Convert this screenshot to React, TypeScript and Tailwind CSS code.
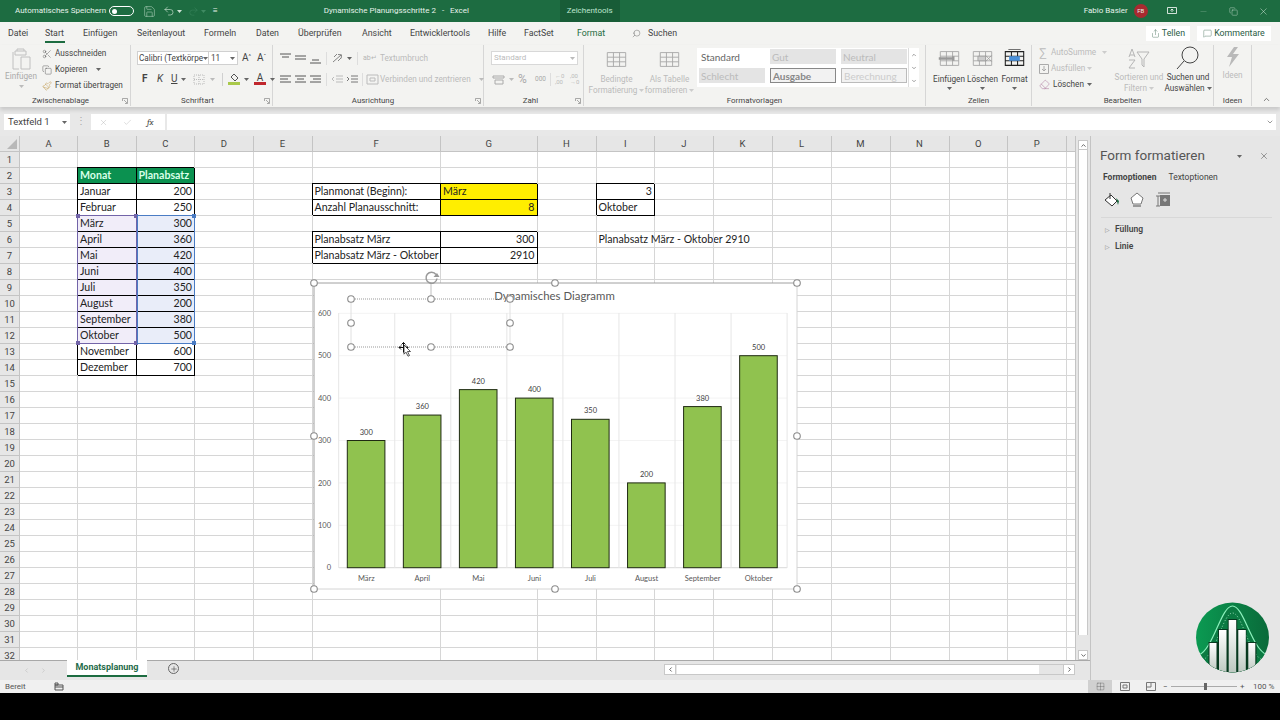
import React from "react";
import { Scissors, Copy, Paintbrush, Save, Undo2, Redo2, Search, X, Minus, Check, ChevronUp, ChevronDown, Share, MessageSquare, Eraser, Plus, ChevronLeft, ChevronRight, Grid2x2 } from "lucide-react";

const ui = "font-['Roboto','Open_Sans',sans-serif]";
const cal = "font-['Lato','Liberation_Sans',sans-serif]";

const Caret = ({ c = "#666" }: { c?: string }) => (
  <svg width="5" height="3" viewBox="0 0 5 3" className="shrink-0"><path d="M0 0h5L2.500 3z" fill={c} /></svg>
);

const Lines = ({ d, c = "#555" }: { d: string; c?: string }) => (
  <svg width="13" height="11" viewBox="0 0 13 11" className="shrink-0"><path d={d} stroke={c} strokeWidth="1" fill="none" /></svg>
);

const Launcher = () => (
  <svg width="6" height="6" viewBox="0 0 6 6" className="shrink-0"><path d="M.5 3V.5H5.500V5.500H3M2 2l3 3" stroke="#888" strokeWidth=".7" fill="none" /></svg>
);

const Group = ({ cls, label, lc = "", launcher, children }: { cls: string; label: string; lc?: string; launcher?: boolean; children: React.ReactNode }) => (
  <div className={`${cls} flex flex-col shrink-0 border-r border-[#d6d6d6] mb-[1px]`}>
    <div className="h-[51px] flex">{children}</div>
    <div className="h-[10px] flex items-center px-[2px] text-[7.900px] text-[#444]">
      <span className={`flex-1 text-center leading-none ${lc}`}>{label}</span>
      {launcher ? <Launcher /> : null}
    </div>
  </div>
);

const tabs: [string, string][] = [
  ["Datei", "w-[37px]"], ["Start", "w-[38px]"], ["Einfügen", "w-[54px]"], ["Seitenlayout", "w-[67px]"],
  ["Formeln", "w-[52px]"], ["Daten", "w-[42px]"], ["Überprüfen", "w-[64px]"], ["Ansicht", "w-[48px]"],
  ["Entwicklertools", "w-[78px]"], ["Hilfe", "w-[36px]"], ["FactSet", "w-[53px]"], ["Format", "w-[55px]"],
];

const GridIcon = ({ mid, dark }: { mid?: string; dark?: boolean }) => (
  <svg width="23" height="19" viewBox="0 0 30 24" className="my-[2px]">
    <path d="M3 3h24v18H3zM3 9h24M3 15h24M11 3v18M19 3v18" stroke={dark ? "#222" : "#a8a8a8"} strokeWidth={dark ? 1.400 : 1.200} fill="none" />
    {mid === "blue" ? <path d="M8 9h14v6H8z" fill="#4a90d9" /> : null}
    {mid === "in" ? <path d="M1 12h20M20 9v6" stroke="#999" strokeWidth="3" fill="none" /> : null}
    {mid === "out" ? <path d="M9 9h10v6H9zM19 8l8 8M27 8l-8 8" stroke="#999" strokeWidth="1" fill="#ccc" /> : null}
    {dark ? <path d="M7 0h16" stroke="#222" strokeWidth="1" /> : null}
  </svg>
);

const StyleCell = ({ t, cls }: { t: string; cls: string }) => (
  <div className={`${cal} ${cls} w-[66px] h-[15px] flex items-center pl-[2px] shrink-0 text-[10px] leading-none`}>{t}</div>
);

function Ribbon() {
  return (
    <div className={`${ui} h-[62px] bg-[#f3f3f1] flex text-[8.200px] text-[#444] leading-none shadow-[0_3px_4px_#c8c8c8] relative z-30`}>
      <Group cls="w-[131px]" label="Zwischenablage" lc="pr-[3px]" launcher>
        <div className="w-[42px] flex flex-col items-center text-[#aaa] pt-[3px]">
          <svg width="20" height="22" viewBox="0 0 20 22"><path d="M4 3h11v4H4zM6 3V1h7v2M2 4v17h6M10 9h9v12h-9z" stroke="#c0c0c0" strokeWidth="1" fill="none" /></svg>
          <span className="mt-[2px]">Einfügen</span>
          <span className="mt-[5px]"><Caret c="#bbb" /></span>
        </div>
        <div className="flex flex-col pt-[3px] gap-[5px]">
          <div className="flex items-center h-[11px] gap-[3px]"><Scissors size={10} strokeWidth={1} /><span>Ausschneiden</span></div>
          <div className="flex items-center h-[11px] gap-[3px]"><Copy size={10} strokeWidth={1} /><span>Kopieren</span><span className="ml-[6px]"><Caret /></span></div>
          <div className="flex items-center h-[11px] gap-[3px]"><Paintbrush size={10} strokeWidth={1} color="#b5892f" /><span>Format übertragen</span></div>
        </div>
      </Group>
      <div className="w-[4px] shrink-0" />
      <Group cls="w-[138px]" label="Schriftart" lc="pr-[6px]" launcher>
        <div className="flex flex-col pl-[2px] pt-[6px]">
          <div className="flex items-center h-[14px]">
            <div className="w-[72px] h-[14px] bg-white border border-[#d0d0d0] flex items-center pl-[1px] text-[8.200px] justify-between pr-[1px] whitespace-nowrap overflow-visible"><span>Calibri (Textkörpe</span><Caret /></div>
            <div className="w-[29px] h-[14px] bg-white border border-l-0 border-[#d0d0d0] flex items-center justify-between px-[2px]"><span>11</span><Caret /></div>
            <span className="ml-[4px] w-[15px] text-[10px]">A<sup className="text-[6px]">^</sup></span>
            <span className="w-[15px] text-[10px]">A<sup className="text-[6px]">ˇ</sup></span>
          </div>
          <div className="flex items-center h-[14px] mt-[7px] text-[10px] pl-[5px]">
            <span className="font-bold w-[15px]">F</span><span className="italic w-[14px]">K</span><span className="underline w-[10px]">U</span><span className="w-[12px]"><Caret /></span>
            <svg width="12" height="11" viewBox="0 0 12 11" className="mr-[5px]"><path d="M1 1h10v9H1zM6 1v9M1 5.500h10" stroke="#bbb" strokeDasharray="1 1" fill="none" /></svg>
            <span className="w-[12px]"><Caret c="#bbb" /></span>
            <span className="w-px h-[13px] bg-[#d0d0d0] mr-[5px]" />
            <div className="w-[12px] flex flex-col items-center mr-[4px]"><svg width="11" height="9" viewBox="0 0 11 9"><path d="M5 1l4 4-3 3-4-4z" stroke="#555" fill="none" /></svg><div className="w-[12px] h-[3px] bg-[#a9c94a]" /></div>
            <span className="w-[10px]"><Caret /></span>
            <div className="w-[12px] flex flex-col items-center mr-[4px] text-[10px] leading-[9px]"><span>A</span><div className="w-[12px] h-[3px] bg-[#c0272d]" /></div>
            <Caret />
          </div>
        </div>
      </Group>
      <div className="w-[4px] shrink-0" />
      <Group cls="w-[207px]" label="Ausrichtung" lc="pr-[8px]" launcher>
        <div className="flex flex-col pl-[2px] pt-[6px] gap-[7px]">
          <div className="flex items-center h-[14px] gap-[2px]">
            <Lines d="M1 1h11M3 4h7" /><Lines d="M1 3h11M1 6h11" /><Lines d="M3 7h7M1 10h11" />
            <span className="w-px h-[13px] bg-[#ddd] mx-[2px]" />
            <svg width="14" height="11" viewBox="0 0 14 11" className="shrink-0"><path d="M2 9l8-7M7 1.500l3.500.3-.3 3.500M3 4l3-3M7 8l3-3" stroke="#777" fill="none" strokeWidth=".9" /></svg><Caret />
            <span className="w-px h-[13px] bg-[#ddd] mx-[3px]" />
            <span className="text-[7px] text-[#b5b5b5] w-[11px] text-center">ab↵</span>
            <span className="text-[#bbb] ml-[4px]">Textumbruch</span>
          </div>
          <div className="flex items-center h-[14px] gap-[2px]">
            <Lines d="M1 2h11M1 5h8M1 8h11" /><Lines d="M1 2h11M3 5h7M1 8h11" /><Lines d="M1 2h11M4 5h8M1 8h11" />
            <span className="w-px h-[13px] bg-[#ddd] mx-[2px]" />
            <Lines d="M5 2h7M5 5h7M5 8h7M3 3L1 5l2 2" c="#bbb" /><Lines d="M5 2h7M5 5h7M5 8h7M1 3l2 2-2 2" c="#777" />
            <span className="w-px h-[13px] bg-[#ddd] mx-px" />
            <Lines d="M1 1h11v9H1zM4 4h5v3H4z" c="#bbb" />
            <span className="text-[#bbb] -ml-[1px] whitespace-nowrap">Verbinden und zentrieren</span>
            <span className="ml-[6px]"><Caret c="#bbb" /></span>
          </div>
        </div>
      </Group>
      <div className="w-[3px] shrink-0" />
      <Group cls="w-[97px]" label="Zahl" lc="pr-[3px]" launcher>
        <div className="flex flex-col pl-[4px] pt-[6px] text-[#bbb]">
          <div className="w-[87px] h-[14px] bg-white border border-[#d8d8d8] flex items-center justify-between px-[2px] text-[8px]"><span>Standard</span><Caret c="#bbb" /></div>
          <div className="flex items-center h-[14px] mt-[7px] gap-[4px] pl-[1px]">
            <Lines d="M1 2h11v2H1zM3 6h8v4H3z" c="#aaa" /><Caret c="#bbb" />
            <span className="text-[12px] text-[#aaa] w-[13px]">%</span>
            <span className="text-[6.500px] text-[#aaa]">000</span>
            <span className="w-px h-[13px] bg-[#ddd]" />
            <span className="text-[6px] leading-[6px] w-[11px]">←0<br />,00</span>
            <span className="text-[6px] leading-[6px] w-[11px]">,00<br />→0</span>
          </div>
        </div>
      </Group>
      <div className="w-[6px] shrink-0" />
      <Group cls="w-[336px]" label="Formatvorlagen" lc="pr-[6px]">
        <div className="w-[53px] flex flex-col items-center text-[#bbb] pt-[3px] whitespace-nowrap">
          <GridIcon />
          <span className="mt-[4px]">Bedingte</span>
          <span className="mt-[3px] flex items-center gap-[2px]">Formatierung<Caret c="#ccc" /></span>
        </div>
        <div className="w-[53px] flex flex-col items-center text-[#bbb] pt-[3px] whitespace-nowrap">
          <GridIcon />
          <span className="mt-[4px]">Als Tabelle</span>
          <span className="mt-[3px] flex items-center gap-[2px]">formatieren<Caret c="#ccc" /></span>
        </div>
        <div className="ml-[1px] mt-[3px] h-[39px] w-[222px] bg-white flex">
          <div className="w-[211px] pl-[2px] pt-[1px] flex flex-col gap-[4px]">
            <div className="flex gap-[5px]">
              <StyleCell t="Standard" cls="text-[#666]" />
              <StyleCell t="Gut" cls="bg-[#e4e4e4] text-[#bbb]" />
              <StyleCell t="Neutral" cls="bg-[#e4e4e4] text-[#bbb]" />
            </div>
            <div className="flex gap-[5px]">
              <StyleCell t="Schlecht" cls="bg-[#e4e4e4] text-[#bbb]" />
              <StyleCell t="Ausgabe" cls="bg-[#f2f2f2] border border-[#888] text-[#888] font-bold" />
              <StyleCell t="Berechnung" cls="bg-[#f2f2f2] border border-[#bbb] text-[#ccc]" />
            </div>
          </div>
          <div className="w-[10px] border-l border-[#ddd] flex flex-col items-center justify-around">
            <ChevronUp size={6} /><ChevronDown size={6} /><ChevronDown size={6} />
          </div>
        </div>
      </Group>
      <Group cls="w-[106px]" label="Zellen">
        <div className="flex pl-[6px] pt-[2px]">
          {[["Einfügen", "in", false, "w-[34px]"], ["Löschen", "out", false, "w-[33px]"], ["Format", "blue", true, "w-[31px]"]].map(([t, m, d, w]) => (
            <div key={t as string} className={`${w as string} flex flex-col items-center`}>
              <GridIcon mid={m as string} dark={d as boolean} />
              <span className="mt-[5px]">{t as string}</span>
              <span className="mt-[4px]"><Caret /></span>
            </div>
          ))}
        </div>
      </Group>
      <Group cls="w-[182px]" label="Bearbeiten">
        <div className="w-[82px] flex flex-col pl-[7px] pt-[2px] gap-[5px] text-[#bbb]">
          <div className="flex items-center h-[11px] gap-[2px]"><span className="text-[12px] w-[10px]">∑</span><span>AutoSumme</span><span className="ml-[4px]"><Caret c="#ccc" /></span></div>
          <div className="flex items-center h-[11px] gap-[2px]"><svg width="10" height="10" viewBox="0 0 10 10"><path d="M.5.5h9v9h-9zM5 2v5M3 5l2 2 2-2" stroke="#aaa" fill="none" /></svg><span>Ausfüllen</span><Caret c="#ccc" /></div>
          <div className="flex items-center h-[11px] gap-[2px] text-[#444]"><Eraser size={11} strokeWidth={1} color="#a0608f" /><span className="ml-[1px]">Löschen</span><span className="ml-[1px]"><Caret /></span></div>
        </div>
        <div className="w-[50px] flex flex-col items-center text-[#bbb] pt-[2px] whitespace-nowrap">
          <svg width="22" height="24" viewBox="0 0 22 24"><path d="M1 10l3-8 3 8M2 8h4M1 13h6l-6 8h6M9 5h12l-5 7v8l-2-2v-6z" stroke="#b5b5b5" fill="none" /></svg>
          <span className="mt-[2px]">Sortieren und</span>
          <span className="mt-[3px] flex items-center gap-[2px]">Filtern<Caret c="#ccc" /></span>
        </div>
        <div className="w-[48px] flex flex-col items-center pt-[1px] whitespace-nowrap">
          <svg width="24" height="25" viewBox="0 0 24 25"><circle cx="14" cy="9" r="8" stroke="#444" fill="none" /><path d="M8 15l-7 8" stroke="#444" /></svg>
          <span className="mt-[2px]">Suchen und</span>
          <span className="mt-[3px] flex items-center gap-[2px]">Auswählen<Caret /></span>
        </div>
      </Group>
      <Group cls="w-[38px]" label="Ideen">
        <div className="w-full flex flex-col items-center text-[#bbb] pt-[1px]">
          <svg width="16" height="22" viewBox="0 0 16 22"><path d="M9 1L2 11h5l-3 10 10-13H8l5-7z" fill="#b9b9b9" /></svg>
          <span className="mt-[3px]">Ideen</span>
        </div>
      </Group>
      <div className="flex-1 flex items-end justify-center pb-[3px]"><ChevronUp size={9} color="#555" /></div>
    </div>
  );
}

const colNames = ["A", "B", "C", "D", "E", "F", "G", "H", "I", "J", "K", "L", "M", "N", "O", "P", ""];
const rowNums = Array.from({ length: 32 }, (_, i) => i + 1);
const box = "border-black shadow-[-1px_-1px_0_0_#000] relative z-10";

type C = { t?: string; r?: boolean; cls?: string };
const cells: Record<string, C> = {
  B2: { t: "Monat", cls: `${box} bg-[#0b9150] text-[#d8ffe8] font-bold` },
  C2: { t: "Planabsatz", cls: `${box} bg-[#0b9150] text-[#d8ffe8] font-bold` },
  F3: { t: "Planmonat (Beginn):", cls: box },
  G3: { t: "März", cls: `${box} bg-[#ffee00]` },
  F4: { t: "Anzahl Planausschnitt:", cls: box },
  G4: { t: "8", r: true, cls: `${box} bg-[#ffee00]` },
  F6: { t: "Planabsatz März", cls: box },
  G6: { t: "300", r: true, cls: box },
  F7: { t: "Planabsatz März - Oktober", cls: box },
  G7: { t: "2910", r: true, cls: box },
  I3: { t: "3", r: true, cls: box },
  I4: { t: "Oktober", cls: box },
  I6: { t: "Planabsatz März - Oktober 2910" },
};
const table: [string, number][] = [["Januar", 200], ["Februar", 250], ["März", 300], ["April", 360], ["Mai", 420], ["Juni", 400], ["Juli", 350], ["August", 200], ["September", 380], ["Oktober", 500], ["November", 600], ["Dezember", 700]];
table.forEach(([m, v], i) => {
  const n = i + 3;
  const sel = n >= 5 && n <= 12;
  cells[`B${n}`] = { t: m, cls: `${box} ${sel ? "bg-[#f1edf9]" : ""}` };
  cells[`C${n}`] = { t: String(v), r: true, cls: `${box} ${sel ? "bg-[#e9edf9]" : ""}` };
});

const Square = ({ cls, c }: { cls: string; c: string }) => <div className={`absolute w-[4px] h-[4px] ${cls} ${c}`} />;

function Sheet() {
  return (
    <div className={`relative h-[524px] w-[1076px] overflow-hidden bg-white grid grid-cols-[20px_58px_58.500px_58.500px_58.500px_59px_128.500px_96.500px_59px_58.500px_58.500px_59px_59px_59px_59px_58.500px_58.500px_10px] auto-rows-[16px] border-r border-[#c4c4c4] ${cal} text-[10.600px] text-[#222] leading-none`}>
      <div className="bg-[#e6e6e6] border-r border-b border-[#c4c4c4] relative">
        <svg width="10" height="10" viewBox="0 0 10 10" className="absolute right-[2px] bottom-[2px]"><path d="M10 0v10H0z" fill="#b8b8b8" /></svg>
      </div>
      {colNames.map((c, i) => (
        <div key={i} className={`${ui} bg-[#e6e6e6] border-r border-b border-[#c4c4c4] flex items-center justify-center text-[9.500px] text-[#444]`}>{c}</div>
      ))}
      {rowNums.map((r) => (
        <React.Fragment key={r}>
          <div className={`${ui} bg-[#e6e6e6] border-r border-b border-[#c4c4c4] flex items-center justify-center text-[9.500px] text-[#444]`}>{r}</div>
          {colNames.map((c, i) => {
            const d = c ? cells[`${c}${r}`] : undefined;
            return (
              <div key={i} className={`border-r border-b border-[#d6d6d6] flex items-center px-[2px] whitespace-nowrap ${d?.r ? "justify-end" : ""} ${d?.cls ?? ""}`}>{d?.t}</div>
            );
          })}
        </React.Fragment>
      ))}
      <div className="absolute z-20 col-start-3 col-end-4 row-start-6 row-end-14 -left-px -top-px right-0 bottom-0 border border-[#7264a8]">
        <Square cls="-left-[2px] -top-[2px]" c="bg-[#7264a8]" /><Square cls="-right-[2px] -top-[2px]" c="bg-[#7264a8]" />
        <Square cls="-left-[2px] -bottom-[2px]" c="bg-[#7264a8]" /><Square cls="-right-[2px] -bottom-[2px]" c="bg-[#7264a8]" />
      </div>
      <div className="absolute z-20 col-start-4 col-end-5 row-start-6 row-end-14 left-0 -top-px right-0 bottom-0 border border-[#4a7cc4]">
        <Square cls="-right-[2px] -top-[2px]" c="bg-[#4a7cc4]" /><Square cls="-right-[2px] -bottom-[2px]" c="bg-[#4a7cc4]" />
      </div>
      <Chart />
    </div>
  );
}

const bars: [string, number][] = [["März", 300], ["April", 360], ["Mai", 420], ["Juni", 400], ["Juli", 350], ["August", 200], ["September", 380], ["Oktober", 500]];

const Handle = ({ x, y }: { x: number; y: number }) => <circle cx={x} cy={y} r="3.300" fill="#fff" stroke="#8c8c8c" strokeWidth="1.100" />;

function Chart() {
  const base = 567.7;
  const k = 254.4 / 600;
  return (
    <div className="absolute z-30 left-[314px] top-[147px] w-[483px] h-[306px] bg-white">
      <svg width="483" height="306" viewBox="314 283 483 306" className="overflow-visible" fontFamily="Lato, sans-serif">
        {[0, 1, 2, 3, 4, 5, 6].map((i) => <path key={i} d={`M339 ${313.3 + i * 42.4}H787`} stroke={i === 6 ? "#d9d9d9" : "#f3f3f3"} />)}
        {[0, 1, 2, 3, 4, 5, 6, 7, 8].map((i) => <path key={i} d={`M${338.7 + i * 56.05} 313V568`} stroke="#e6e6e6" />)}
        {["600", "500", "400", "300", "200", "100", "0"].map((t, i) => (
          <text key={t} x="331" y={316 + i * 42.4} textAnchor="end" fontSize="7.500" fill="#595959">{t}</text>
        ))}
        {bars.map(([m, v], i) => {
          const x = 347.3 + i * 56.05;
          const top = base - v * k;
          return (
            <g key={m}>
              <rect x={x} y={top} width="37.600" height={base - top} fill="#90c24f" stroke="#1f2a12" strokeWidth="1" />
              <text x={x + 19} y={top - 6} textAnchor="middle" fontSize="7.500" fill="#404040">{v}</text>
              <text x={x + 19} y="580.500" textAnchor="middle" fontSize="7.500" fill="#595959">{m}</text>
            </g>
          );
        })}
        <text x="554.500" y="300" textAnchor="middle" fontSize="11.400" fill="#595959">Dynamisches Diagramm</text>
        <path d="M314 589V283H797" stroke="#a0a0a0" strokeWidth="1" fill="none" />
        <path d="M797 283V589H314" stroke="#d4d4d4" strokeWidth="1" fill="none" />
        <path d="M431 283V299" stroke="#c0c0c0" />
        <path d="M351 299H510M351 347H510" stroke="#999" strokeDasharray="1 1" />
        <path d="M351 299V347M510 299V347" stroke="#e0e0e0" />
        {[[351, 299], [431, 299], [510, 299], [351, 323], [510, 323], [351, 347], [431, 347], [510, 347], [314, 283], [555, 283], [797, 283], [314, 436], [797, 436], [314, 589], [555, 589], [797, 589]].map(([x, y]) => <Handle key={`${x}-${y}`} x={x} y={y} />)}
        <path d="M436 274.500a5.500 5.500 0 1 0 1 4" stroke="#999" strokeWidth="1.500" fill="none" />
        <path d="M433.500 277h6l-2.500-4z" fill="#999" />
        <path d="M399 347.500h9M403.500 342.500v10M401 345.500l-2 2 2 2M406 345.500l2 2-2 2M401.500 344.500l2-2 2 2" stroke="#111" strokeWidth="1" fill="none" />
        <path d="M404 345l6.500 6.500h-3l2 4-1.500.7-2-4-2 2z" fill="#fff" stroke="#111" strokeWidth=".7" />
      </svg>
    </div>
  );
}

function Logo() {
  return (
    <svg width="76" height="74" viewBox="1196 601 76 74" className="absolute right-[9px] top-[465px]">
      <defs>
        <linearGradient id="lg" x1="0" y1="0" x2="1" y2="0"><stop offset="0" stopColor="#0b9a52" /><stop offset="1" stopColor="#0a6a3a" /></linearGradient>
        <linearGradient id="bg" x1="0" y1="0" x2="0" y2="1"><stop offset="0" stopColor="#fff" /><stop offset="1" stopColor="#bcc8c0" /></linearGradient>
        <clipPath id="cp"><ellipse cx="1233.500" cy="637.500" rx="36.500" ry="35" /></clipPath>
      </defs>
      <ellipse cx="1233.500" cy="637.500" rx="36.500" ry="35" fill="url(#lg)" />
      <g clipPath="url(#cp)">
        <path d="M1200 655C1215 648 1222 606 1233.500 606S1252 648 1268 655V680H1200z" fill="#0b7a42" />
        <path d="M1200 655C1215 648 1222 606 1233.500 606S1252 648 1268 655" stroke="#8cf0bc" strokeWidth="1.200" fill="none" />
        <path d="M1204 660C1218 652 1224 613 1233.500 613S1249 652 1263 660" stroke="#b8f0d0" strokeWidth=".8" strokeDasharray="1 2" fill="none" />
        <rect x="1209.500" y="642" width="48" height="33" fill="#07391f" />
        <rect x="1219" y="629" width="28.500" height="40" fill="#07391f" />
        <rect x="1228.700" y="619" width="9.500" height="50" fill="#07391f" />
        <rect x="1210.500" y="643" width="7" height="30" fill="url(#bg)" />
        <rect x="1220" y="630" width="7.500" height="43" fill="url(#bg)" />
        <rect x="1229.700" y="620" width="7.500" height="53" fill="url(#bg)" />
        <rect x="1239.300" y="630" width="7.500" height="43" fill="url(#bg)" />
        <rect x="1249.300" y="643" width="7" height="30" fill="url(#bg)" />
      </g>
    </svg>
  );
}

export default function App() {
  return (
    <div className={`${ui} w-[1280px] h-[720px] bg-black flex flex-col overflow-hidden`}>
      <div className="h-[22px] bg-[#1d6c41] flex items-center text-[8px] text-[#e6f2ea] shrink-0 leading-none">
        <span className="ml-[15px] w-[94px] whitespace-nowrap">Automatisches Speichern</span>
        <div className="w-[25px] h-[10px] rounded-full border border-white flex items-center pl-[2px]"><div className="w-[5px] h-[5px] rounded-full bg-white" /></div>
        <span className="ml-[9px]"><Save size={13} strokeWidth={1} color="#b8d8c4" /></span>
        <span className="ml-[7px]"><Undo2 size={12} strokeWidth={1.200} color="#dcecdf" /></span>
        <span className="ml-[2px]"><Caret c="#cfe3d6" /></span>
        <span className="ml-[6px]"><Redo2 size={11} strokeWidth={1} color="#3f8a62" /></span>
        <span className="ml-[2px]"><Caret c="#3f8a62" /></span>
        <span className="ml-[7px] text-[8px]">≡</span>
        <span className="ml-[106px] w-[236px] whitespace-pre">Dynamische Planungsschritte 2   -   Excel</span>
        <div className="w-[60px] h-[22px] bg-[#185c37] flex items-center justify-center text-[#bfe6cf] text-[8px]">Zeichentools</div>
        <span className="ml-[464px] w-[48px] whitespace-nowrap">Fabio Basler</span>
        <div className="w-[14px] h-[14px] rounded-full bg-[#a82a30] flex items-center justify-center text-[6px] ml-[2px]">FB</div>
        <span className="ml-[19px] w-[32px]"><svg width="10" height="8" viewBox="0 0 10 8"><path d="M.5.5h9v6h-9zM5 5V2M3.500 3.500L5 2l1.500 1.500" stroke="#fff" fill="none" strokeWidth=".8" /></svg></span>
        <span className="w-[30px]"><Minus size={9} strokeWidth={1} color="#80b095" /></span>
        <span className="w-[29px]"><Copy size={9} strokeWidth={1} /></span>
        <span><X size={11} strokeWidth={1} /></span>
      </div>
      <div className="h-[23px] bg-[#f3f3f1] flex items-center pl-[8px] text-[8.800px] text-[#444] shrink-0 leading-none relative">
        {tabs.map(([t, w]) => (
          <div key={t} className={`${w} h-[23px] flex items-center relative ${t === "Format" ? "text-[#1d6c41]" : ""}`}>
            <span>{t}</span>
            {t === "Start" ? <div className="absolute left-0 bottom-[2px] w-[20px] h-[2px] bg-[#1d6c41]" /> : null}
          </div>
        ))}
        <Search size={9} strokeWidth={1} className="-scale-x-100" />
        <span className="ml-[7px]">Suchen</span>
        <div className="ml-auto flex items-center gap-[7px] pr-[9px] text-[#2a5c44]">
          <div className="w-[44px] h-[15px] bg-white flex items-center justify-center gap-[2px]"><Share size={9} strokeWidth={1} /><span>Tellen</span></div>
          <div className="w-[74px] h-[15px] bg-white flex items-center justify-center gap-[2px]"><MessageSquare size={9} strokeWidth={1} /><span>Kommentare</span></div>
        </div>
      </div>
      <Ribbon />
      <div className="h-[29px] bg-[#e8e8e8] shrink-0 pt-[7px] pl-[4px] pr-[4px] flex items-start text-[9.500px] text-[#444] leading-none">
        <div className="w-[66px] h-[16px] bg-white flex items-center justify-between pl-[4px] pr-[3px]"><span>Textfeld 1</span><Caret /></div>
        <span className="w-[21px] text-center text-[#aaa] mt-[2px]">⋮</span>
        <div className="w-[74px] h-[16px] bg-white flex items-center pl-[8px] gap-[15px]">
          <X size={9} strokeWidth={1} color="#aaa" /><Check size={9} strokeWidth={1} color="#aaa" /><span className="italic font-serif text-[9px]">fx</span>
        </div>
        <div className="flex-1 h-[16px] bg-white ml-[2px] flex items-center justify-end pr-[2px]"><ChevronDown size={8} color="#666" /></div>
      </div>
      <div className="flex h-[544px] shrink-0">
        <div className="w-[1090px] flex flex-col">
          <div className="flex h-[524px]">
            <Sheet />
            <div className="w-[14px] bg-[#e6e6e6] pl-[2px] pr-[2px] pt-[4px] flex flex-col">
              <div className="h-[10px] bg-white border border-[#c8c8c8] flex items-center justify-center"><ChevronUp size={7} strokeWidth={3} color="#555" /></div>
              <div className="h-[485px] bg-white border-x border-[#c8c8c8]" />
              <div className="h-[15px]" />
              <div className="h-[10px] bg-white border border-[#c8c8c8] flex items-center justify-center"><ChevronDown size={7} strokeWidth={3} color="#555" /></div>
            </div>
          </div>
          <div className="h-[20px] bg-[#e6e6e6] flex items-start border-t border-[#a8a8a8] text-[#bbb]">
            <div className="w-[67px] flex justify-center gap-[10px] pl-[2px] pt-[6px]"><ChevronLeft size={7} /><ChevronRight size={7} /></div>
            <div className="w-[80px] h-[17px] -mt-px bg-white border-b-2 border-[#1d6c41] text-[#1f6b4a] font-bold text-[9px] flex items-center justify-center">Monatsplanung</div>
            <div className="ml-[21px] mt-[2px] w-[11px] h-[11px] rounded-full border border-[#666] flex items-center justify-center"><Plus size={8} color="#555" /></div>
            <div className="ml-[485px] mt-[3px] w-[411px] h-[11px] bg-[#e6e6e6] border border-[#c8c8c8] flex items-center justify-between">
              <div className="w-[11px] h-[9px] bg-white flex items-center justify-center border-r border-[#c8c8c8]"><ChevronLeft size={7} strokeWidth={3} color="#555" /></div>
              <div className="flex-1 h-[9px] ml-[1px] mr-[24px] bg-white" />
              <div className="w-[11px] h-[9px] bg-white flex items-center justify-center border-l border-[#c8c8c8]"><ChevronRight size={7} strokeWidth={3} color="#555" /></div>
            </div>
          </div>
        </div>
        <div className="w-[190px] bg-[#e6e6e6] border-l border-[#c4c4c4] relative text-[#444] leading-none">
          <div className="flex items-center pl-[9px] pr-[11px] pt-[12px] h-[28px]">
            <span className="text-[13.500px] text-[#555] w-[137px] whitespace-nowrap">Form formatieren</span>
            <Caret />
            <span className="ml-[17px]"><X size={10} strokeWidth={1.200} /></span>
          </div>
          <div className="flex pl-[12px] gap-[12px] text-[8.500px] mt-[8px] h-[10px] items-center whitespace-nowrap">
            <span className="font-bold">Formoptionen</span><span>Textoptionen</span>
          </div>
          <div className="flex items-center pl-[12px] gap-[10px] mt-[9px] h-[18px] pb-[1px]">
            <svg width="16" height="16" viewBox="0 0 16 16"><path d="M8 3l6 6-5 5-7-6z" fill="#fff" stroke="#333" /><path d="M13 6l3 3-1 4z" fill="#1d6c41" /><path d="M7 1v6" stroke="#333" /></svg>
            <svg width="16" height="16" viewBox="0 0 16 16"><path d="M8 1l6 5-2 6H4L2 6z" fill="#fff" stroke="#777" /><path d="M4 14h8" stroke="#999" strokeWidth="2" /></svg>
            <svg width="16" height="16" viewBox="0 0 16 16"><path d="M3 1h12M1 4h4M3 4v10M1 14h4" stroke="#777" fill="none" /><rect x="5" y="3" width="10" height="11" fill="#777" /><path d="M8 8h4M10 6v4" stroke="#ddd" /></svg>
          </div>
          <div className="mt-[8px] ml-[10px] mr-[8px] h-px bg-[#d8d8d8]" />
          <div className="pl-[14px] mt-[7px] text-[8.500px] font-semibold flex flex-col gap-[8px]">
            <div className="h-[9px] flex items-center gap-[5px]"><span className="text-[6px] text-[#888] font-normal">▷</span>Füllung</div>
            <div className="h-[9px] flex items-center gap-[5px]"><span className="text-[6px] text-[#888] font-normal">▷</span>Linie</div>
          </div>
          <Logo />
        </div>
      </div>
      <div className="h-[13px] bg-[#f0f0f0] flex items-center text-[8px] text-[#555] shrink-0 leading-none">
        <span className="ml-[5px] w-[49px]">Bereit</span>
        <svg width="10" height="9" viewBox="0 0 10 9"><path d="M1 3h8v5H1zM1 5h8M1 1h3v2H1z" stroke="#555" fill="none" /></svg>
        <div className="ml-[1024px] w-[24px] h-[13px] bg-[#d0d0d0] flex items-center justify-center"><Grid2x2 size={9} strokeWidth={1} color="#555" /></div>
        <svg width="10" height="9" viewBox="0 0 10 9" className="ml-[8px]"><path d="M.5.5h9v8h-9zM3 3h4v3H3z" stroke="#777" fill="none" /></svg>
        <svg width="10" height="9" viewBox="0 0 10 9" className="ml-[16px]"><path d="M.5.5h9v8h-9zM5 1v4H1" stroke="#777" fill="none" /></svg>
        <span className="ml-[7px] w-[8px] text-[#555]">−</span>
        <div className="w-[66px] h-px bg-[#aaa] relative"><div className="absolute left-[33px] -top-[3px] w-[3px] h-[7px] bg-[#666]" /></div>
        <span className="ml-[3px] w-[13px]">+</span>
        <span className="whitespace-nowrap">100 %</span>
      </div>
      <div className="flex-1 bg-black" />
    </div>
  );
}
